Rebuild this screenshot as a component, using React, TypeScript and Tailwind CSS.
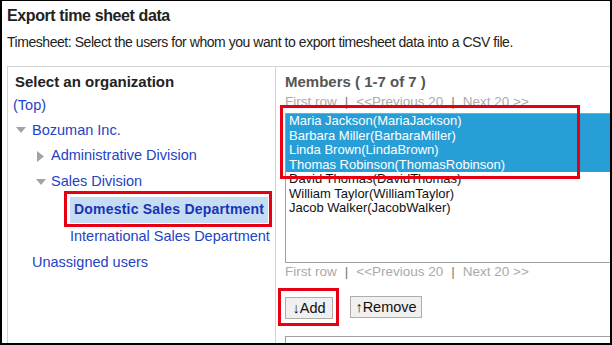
const members = [
  { name: "Maria Jackson(MariaJackson)", selected: true },
  { name: "Barbara Miller(BarbaraMiller)", selected: true },
  { name: "Linda Brown(LindaBrown)", selected: true },
  { name: "Thomas Robinson(ThomasRobinson)", selected: true },
  { name: "David Thomas(DavidThomas)", selected: false },
  { name: "William Taylor(WilliamTaylor)", selected: false },
  { name: "Jacob Walker(JacobWalker)", selected: false },
];

function TriangleDown() {
  return (
    <svg width="10" height="7" viewBox="0 0 10 7" className="shrink-0">
      <polygon points="0,0 10,0 5,6" fill="#a3a3a3" />
    </svg>
  );
}

function TriangleRight() {
  return (
    <svg width="7" height="11" viewBox="0 0 7 11" className="shrink-0">
      <polygon points="0,0 7,5.5 0,11" fill="#a3a3a3" />
    </svg>
  );
}

function Pager() {
  return (
    <div className="flex items-center text-[13.5px] text-[#aaaaaa]">
      <span>First row</span>
      <span className="mx-[8px] text-[#777]">|</span>
      <span>&lt;&lt;Previous 20</span>
      <span className="mx-[8px] text-[#777]">|</span>
      <span>Next 20 &gt;&gt;</span>
    </div>
  );
}

export default function App() {
  return (
    <div className="relative h-[345px] w-[612px] overflow-hidden border-x-2 border-t border-b-2 border-black bg-white font-['Liberation_Sans',Arial,sans-serif] text-[#222]">
      <div className="pl-[5px] pt-[3px]">
        <h1 className="text-[16px] font-bold leading-[24px] tracking-[-0.4px]">Export time sheet data</h1>
        <p className="mt-[4px] text-[14px] leading-[20px] tracking-[-0.45px]">
          Timesheet: Select the users for whom you want to export timesheet data into a CSV file.
        </p>

        {/* Two-column picker: organization tree on the left, members on the right. */}
        <div className="mt-[14px] flex h-[300px] border-l border-t border-[#d4d4d4]">
          <div className="w-[268px] shrink-0 border-r border-[#d4d4d4] pt-[5px] text-[14.5px] text-[#2244c4]">
            <div className="h-[20px] pl-[7px] text-[15px] font-bold leading-[20px] text-[#222]">Select an organization</div>
            <div className="mt-[2px] flex h-[24px] items-center pl-[5px]">(Top)</div>
            <div className="flex h-[25px] items-center pl-[8px]">
              <TriangleDown />
              <span className="ml-[6px]">Bozuman Inc.</span>
            </div>
            <div className="flex h-[26px] items-center pl-[29px]">
              <TriangleRight />
              <span className="ml-[7px]">Administrative Division</span>
            </div>
            <div className="flex h-[26px] items-center pl-[28px]">
              <TriangleDown />
              <span className="ml-[5px]">Sales Division</span>
            </div>
            <div className="relative flex h-[29px] items-center">
              <span className="ml-[62px] flex h-[26px] w-[198px] items-center bg-[#c6dcf2] pl-[4px] text-[14px] font-bold tracking-[0.2px] text-[#1634b8]">
                Domestic Sales Department
              </span>
              <div className="absolute left-[56px] top-[-4px] h-[36px] w-[208px] border-[3px] border-[#e60012]" />
            </div>
            <div className="flex h-[26px] items-center pl-[62px]">International Sales Department</div>
            <div className="flex h-[26px] items-center pl-[24px]">Unassigned users</div>
          </div>

          <div className="min-w-0 flex-1 pl-[9px] pt-[5px]">
            <div className="h-[20px] text-[15px] font-bold leading-[20px] text-[#555]">Members ( 1-7 of 7 )</div>
            <div className="h-[20px]">
              <Pager />
            </div>
            <div className="relative mt-[1px]">
              <div className="h-[150px] w-[360px] border border-[#a0a0a0] text-[13px]">
                {members.map((m) => (
                  <div
                    key={m.name}
                    className={
                      m.selected
                        ? "h-[14.5px] bg-[#289ed7] pl-[3px] leading-[14.5px] text-white"
                        : "h-[14.5px] pl-[3px] leading-[14.5px] text-[#111]"
                    }
                  >
                    {m.name}
                  </div>
                ))}
              </div>
              <div className="absolute left-[-5px] top-[-8px] h-[74px] w-[300px] border-[3px] border-[#e60012]" />
            </div>
            <div className="flex h-[18px] items-center">
              <Pager />
            </div>
            <div className="mt-[15px] flex gap-[17px]">
              <div className="relative">
                <button className="h-[22px] w-[48px] border border-[#adadad] bg-[#f0f0f0] text-[14.5px] text-[#111]">
                  ↓Add
                </button>
                <div className="absolute left-[-7px] top-[-8px] h-[38px] w-[61px] border-[3px] border-[#e60012]" />
              </div>
              <button className="h-[22px] w-[72px] border border-[#adadad] bg-[#f0f0f0] text-[14.5px] text-[#111]">
                ↑Remove
              </button>
            </div>
            <div className="mt-[16px] h-[60px] w-[360px] border border-[#a0a0a0]" />
          </div>
        </div>
      </div>
    </div>
  );
}
